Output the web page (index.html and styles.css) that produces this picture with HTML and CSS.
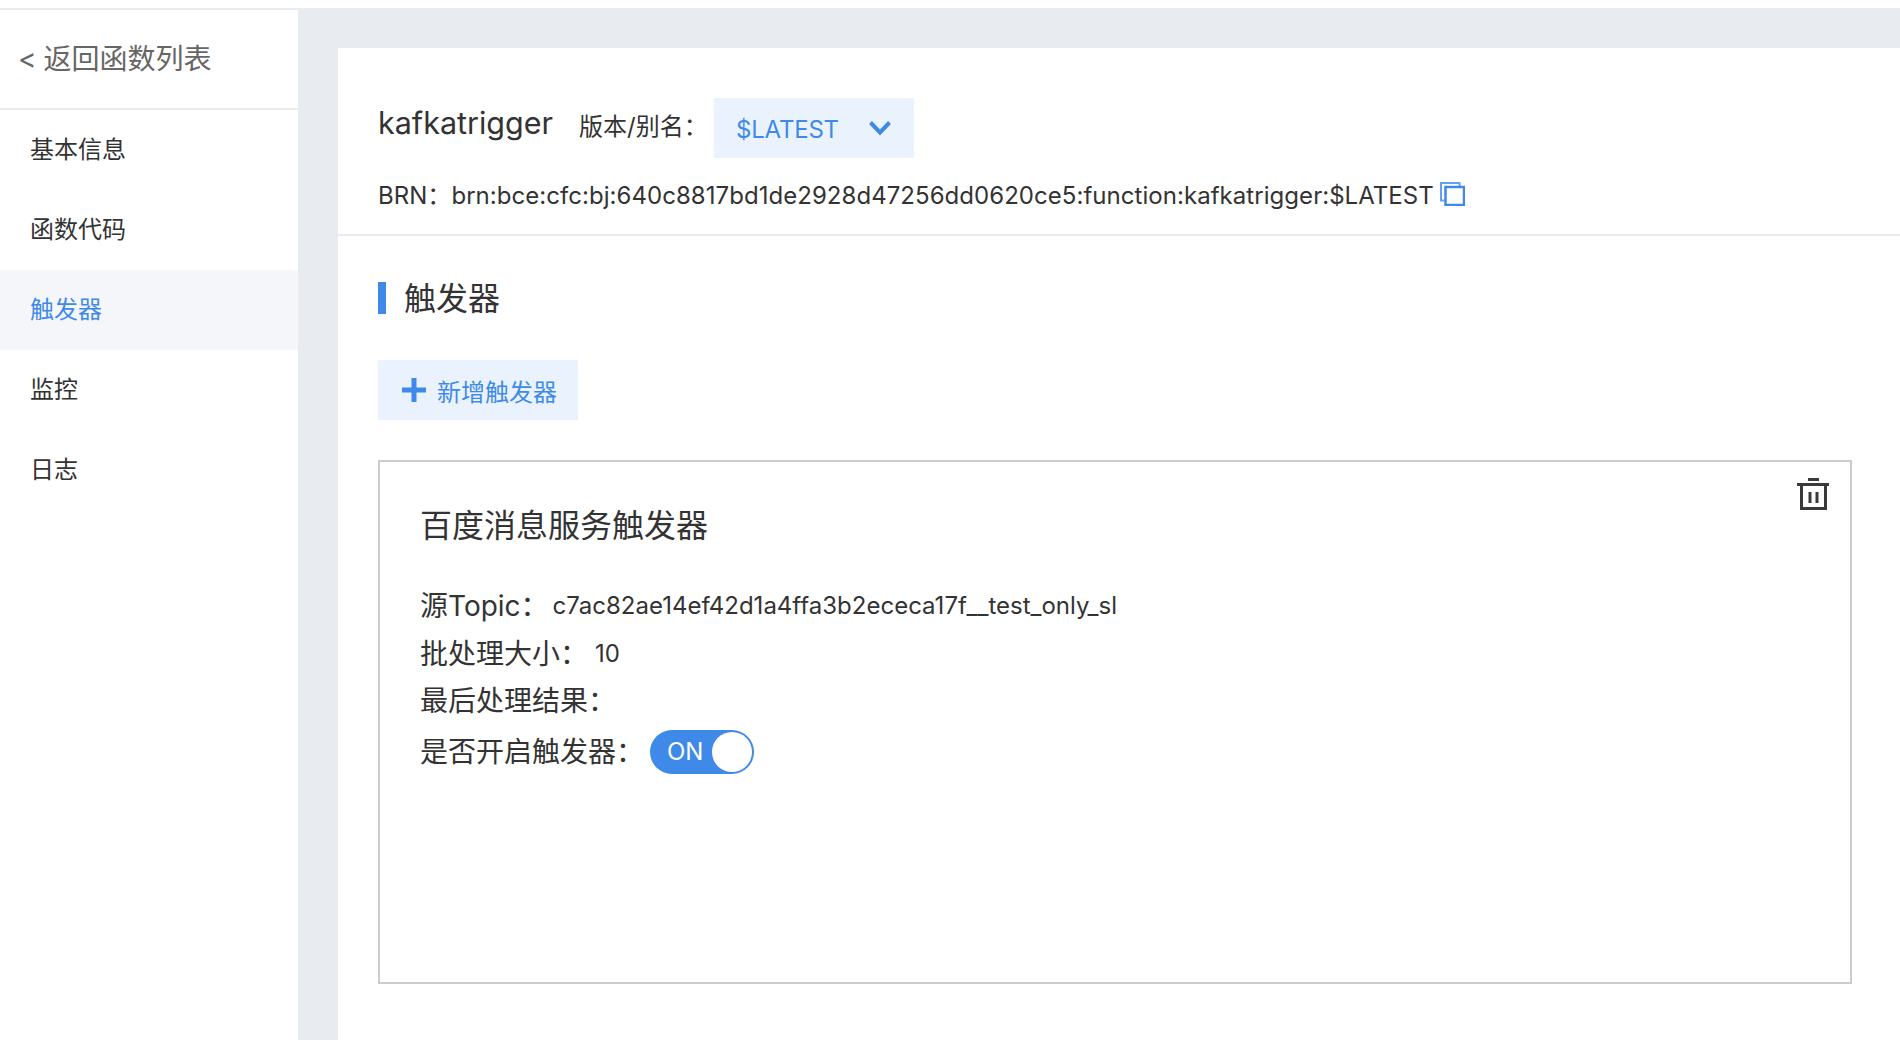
FILE: index.html
```html
<!DOCTYPE html>
<html lang="zh-CN">
<head>
<meta charset="utf-8">
<title>kafkatrigger</title>
<link rel="stylesheet" href="styles.css">
</head>
<body>
<div class="top-band"></div>
<div class="layout">
  <aside class="sidebar">
    <div class="back">&lt; 返回函数列表</div>
    <nav class="nav">
      <div class="nav-item">基本信息</div>
      <div class="nav-item">函数代码</div>
      <div class="nav-item active">触发器</div>
      <div class="nav-item">监控</div>
      <div class="nav-item">日志</div>
    </nav>
  </aside>
  <main class="main">
    <div class="content">
      <header class="header">
        <div class="title-row">
          <h1 class="title">kafkatrigger</h1>
          <span class="version-label">版本/别名：</span>
          <div class="select">
            <span class="select-text">$LATEST</span>
            <svg class="chevron" width="24" height="16" viewBox="0 0 24 16"><path d="M2.500 2.500 12 12.500 21.500 2.500" fill="none" stroke="#3f8ae8" stroke-width="4"/></svg>
          </div>
        </div>
        <div class="brn-row">
          <span class="brn">BRN：brn:bce:cfc:bj:640c8817bd1de2928d47256dd0620ce5:function:kafkatrigger:$LATEST</span>
          <svg class="copy" width="25" height="24" viewBox="0 0 25 24"><path d="M4.500 18.500H1V1H19.500V4" fill="none" stroke="#3f8ae8" stroke-width="2" opacity=".8"/><rect x="5.500" y="5" width="18.500" height="18" fill="#fff" stroke="#3f8ae8" stroke-width="2.500"/></svg>
        </div>
      </header>
      <section class="section">
        <h2 class="section-title"><span class="section-text">触发器</span></h2>
        <button class="add-btn" type="button">
          <svg width="24" height="24" viewBox="0 0 24 24"><path d="M0 12H24M12 0V24" stroke="#3f8ae8" stroke-width="5"/></svg>
          <span>新增触发器</span>
        </button>
        <div class="card">
          <svg class="trash" width="32" height="32" viewBox="0 0 32 32"><path d="M11 1.500H22M0 6.500H32M4.500 7V30.500H28.500V7M13 14V25M20 14V25" fill="none" stroke="#3a3a3a" stroke-width="3"/></svg>
          <h3 class="card-title">百度消息服务触发器</h3>
          <div class="field topic"><span class="label">源Topic：</span><span class="value">c7ac82ae14ef42d1a4ffa3b2ececa17f__test_only_sl</span></div>
          <div class="field batch"><span class="label">批处理大小：</span><span class="value">10</span></div>
          <div class="field result"><span class="label">最后处理结果：</span></div>
          <div class="field enable"><span class="label">是否开启触发器：</span>
            <span class="switch"><span class="switch-text">ON</span><span class="knob"></span></span>
          </div>
        </div>
      </section>
    </div>
  </main>
</div>
</body>
</html>
```
FILE: styles.css
```css
* { box-sizing: border-box; }
html, body { margin: 0; height: 100%; overflow: hidden; background: #fff; }
body { font-family: Inter, "Noto Sans CJK SC", sans-serif; color: #333; }
h1, h2, h3 { margin: 0; font-weight: 400; }

.top-band { height: 8px; background: #fff; }
.layout { display: flex; height: 1032px; background: #e8ecf0; }

.sidebar { width: 298px; flex: none; margin-top: 2px; background: #fff; }
.back { height: 98px; padding: 0 0 5px 18px; display: flex; align-items: center; font-size: 28px; color: #666; white-space: pre; word-spacing: -1px; }
.nav { border-top: 2px solid #e8ecf0; }
.nav-item { height: 80px; padding: 0 0 5px 30px; display: flex; align-items: center; font-size: 24px; color: #333; }
.nav-item.active { background: #f5f6fa; color: #3f8ae8; }

.main { flex: 1; padding: 40px 0 0 40px; min-width: 0; }
.content { height: 100%; background: #fff; }

.header { height: 188px; padding: 50px 0 0 40px; border-bottom: 2px solid #e8ecf0; }
.title-row { display: flex; align-items: center; height: 60px; }
.title { font-size: 30.5px; line-height: 60px; width: 201px; margin-top: -10px; white-space: nowrap; }
.version-label { font-size: 24px; width: 135px; margin-top: -8px; white-space: nowrap; }
.select { width: 200px; height: 60px; padding: 0 22px 0 22px; display: flex; align-items: center; justify-content: space-between; background: #eaf3fd; color: #3f8ae8; font-size: 24px; }
.select-text { margin-top: 2px; letter-spacing: -.2px; }
.chevron { margin-top: -1px; }
.brn-row { display: flex; align-items: center; height: 36px; margin-top: 17px; }
.brn { font-size: 24px; white-space: nowrap; letter-spacing: .045px; }
.copy { margin-left: 6px; margin-top: 2px; flex: none; }

.section { padding: 46px 48px 0 40px; }
.section-title { height: 32px; padding-left: 18px; border-left: 8px solid #3f8ae8; font-size: 32px; line-height: 32px; }
.section-text { position: relative; top: 1px; }
.add-btn { margin-top: 46px; width: 200px; height: 60px; padding: 0 0 0 24px; display: flex; align-items: center; gap: 11px; border: 0; background: #eaf3fd; color: #3f8ae8; font: inherit; font-size: 24px; }

.card { position: relative; margin-top: 40px; height: 524px; padding: 42px 0 0 40px; border: 2px solid #ccc; }
.trash { position: absolute; top: 16px; right: 21px; }
.card-title { font-size: 32px; line-height: 44px; }
.field { display: flex; align-items: center; white-space: nowrap; }
.label { font-size: 28px; }
.value { font-size: 24px; }
.topic { margin-top: 32px; height: 48px; }
.topic .value { margin: 2px 0 0 4px; }
.batch { height: 48px; }
.batch .value { margin: 2px 0 0 7px; }
.result { height: 48px; }
.result .label { margin-top: -2px; }
.enable { height: 54px; margin-top: 1px; }
.enable .label { margin-top: -4px; }
.switch { position: relative; display: block; width: 104px; height: 44px; margin-left: 6px; border-radius: 22px; background: #3f8ae8; color: #fff; font-size: 24px; }
.switch-text { position: absolute; left: 17px; top: 0; line-height: 44px; }
.knob { position: absolute; right: 2px; top: 2px; width: 40px; height: 40px; border-radius: 50%; background: #fff; }
```
